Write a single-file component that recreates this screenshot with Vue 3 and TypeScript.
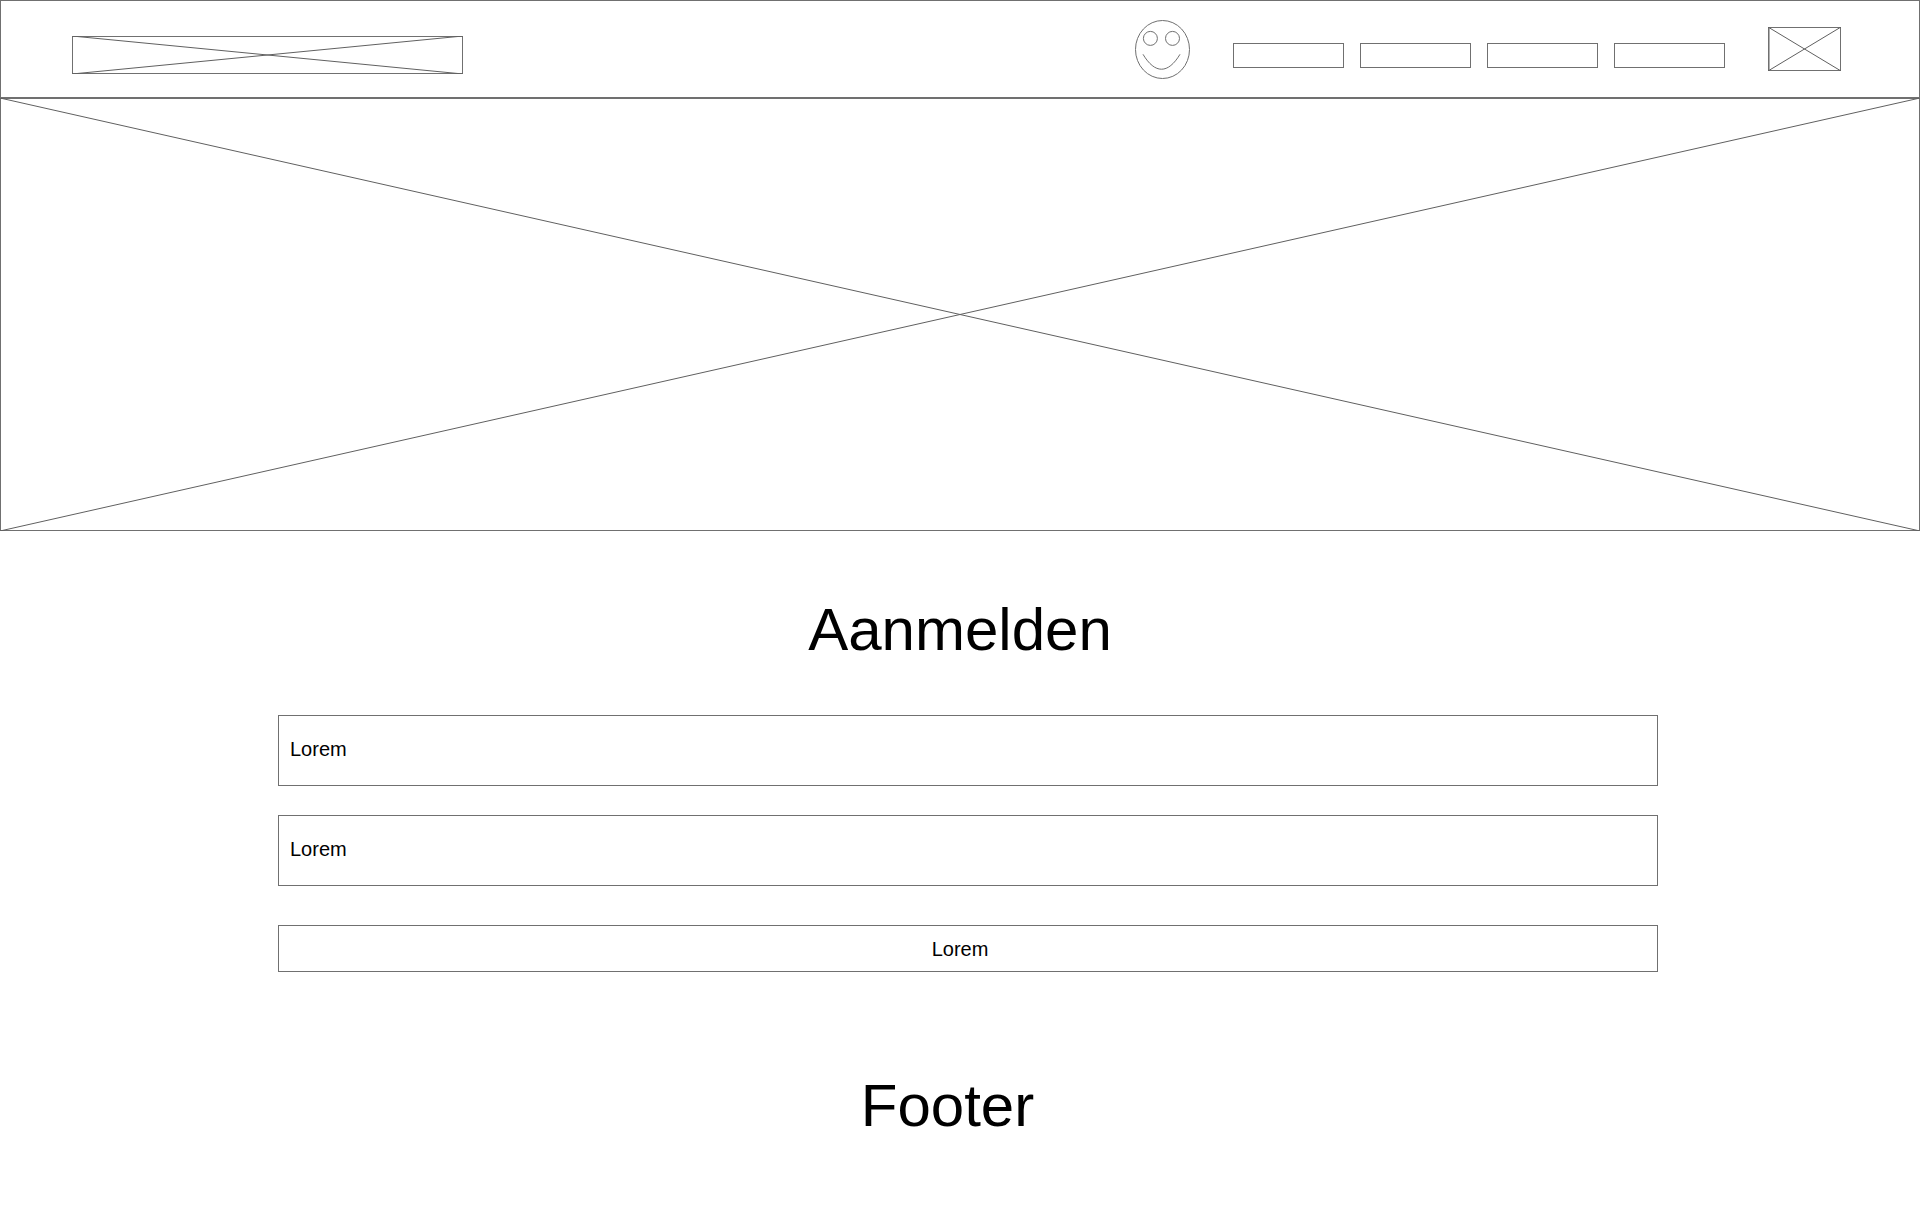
<script setup lang="ts">
import { ref } from 'vue'

const links: string[] = ['#one', '#two', '#three', '#four']
const first = ref<string>('Lorem')
const second = ref<string>('Lorem')
</script>

<template>
  <div class="page">
    <header class="bar">
      <a class="logo" href="#" aria-label="Logo">
        <svg class="cross" viewBox="0 0 100 100" preserveAspectRatio="none" aria-hidden="true">
          <path d="M0 0 L100 100 M0 100 L100 0" />
        </svg>
      </a>
      <svg class="smiley" viewBox="0 0 56 60" aria-hidden="true">
        <ellipse cx="28.5" cy="30.5" rx="27" ry="29" />
        <circle cx="16.4" cy="19.4" r="7" />
        <circle cx="38.5" cy="19.4" r="7" />
        <path d="M9 35.3 C21 55.2 34 55.2 46 35.3" />
      </svg>
      <nav class="links">
        <a v-for="link in links" :key="link" class="link" :href="link" :aria-label="link.slice(1)"></a>
      </nav>
      <button class="mail" type="button" aria-label="Menu">
        <svg class="cross" viewBox="0 0 100 100" preserveAspectRatio="none" aria-hidden="true">
          <path d="M0 0 L100 100 M0 100 L100 0" />
        </svg>
      </button>
    </header>

    <section class="hero">
      <svg class="cross" viewBox="0 0 100 100" preserveAspectRatio="none" aria-hidden="true">
        <path d="M0 0 L100 100 M0 100 L100 0" />
      </svg>
    </section>

    <main>
      <h1 class="title">Aanmelden</h1>
      <form class="form" @submit.prevent>
        <input v-model="first" class="field" type="text" aria-label="Lorem" />
        <input v-model="second" class="field" type="text" aria-label="Lorem" />
        <button class="submit" type="submit">Lorem</button>
      </form>
    </main>

    <footer class="footer">Footer</footer>
  </div>
</template>

<style>
body {
  margin: 0;
  background: #fff;
}
</style>

<style scoped>
.page,
.page * {
  box-sizing: border-box;
}

.page {
  color: #000;
  font-family: "Liberation Sans", Arial, sans-serif;
  font-size: 20px;
}

.bar {
  display: flex;
  align-items: center;
  height: 98px;
  padding: 0 78px 0 71px;
  border: 1px solid #707070;
}

/* The diagonals run to the outer corners, over the 1px border. */
.cross {
  display: block;
  width: calc(100% + 2px);
  height: calc(100% + 2px);
  margin: -1px;
}

.cross path {
  fill: none;
  stroke: #606060;
  stroke-width: 1px;
  vector-effect: non-scaling-stroke;
}

.logo {
  width: 391px;
  height: 38px;
  margin: 12px auto 0 0;
  border: 1px solid #707070;
}

.smiley {
  width: 56px;
  height: 60px;
  margin-right: 43px;
  fill: none;
  stroke: #707070;
}

.links {
  display: flex;
  gap: 16px;
  margin: 13px 43px 0 0;
}

.link {
  width: 111px;
  height: 25px;
  border: 1px solid #707070;
}

.mail {
  width: 73px;
  height: 44px;
  padding: 0;
  border: 1px solid #707070;
  background: none;
  box-shadow: inset 1px 0 #b0b0b0;
}

.hero {
  height: 433px;
  border: 1px solid #707070;
}

.title,
.footer {
  font-size: 60px;
  font-weight: 400;
  line-height: 70px;
  text-align: center;
}

.title {
  margin: 64px 0 50px;
}

.form {
  display: flex;
  flex-direction: column;
  margin: 0 262px 0 278px;
}

.field,
.submit {
  border: 1px solid #707070;
  border-radius: 0;
  background: none;
  color: inherit;
  font: inherit;
}

.field {
  height: 71px;
  margin-bottom: 29px;
  padding: 0 11px 3px;
}

.submit {
  height: 47px;
  margin-top: 10px;
  padding: 2px 16px 0 0;
}

.footer {
  margin-top: 99px;
  padding-right: 25px;
}
</style>
